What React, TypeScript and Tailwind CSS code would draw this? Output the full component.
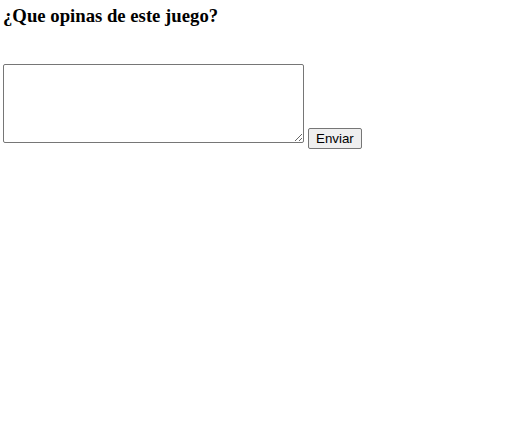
import React, { useState } from 'react';

export default function App() {
  const [text, setText] = useState('');

  return (
    <div className="min-h-[434px] bg-white px-[3px] pt-[5px] font-['Liberation_Serif','Times_New_Roman',serif] text-black">
      <h3 className="text-[18.72px] font-bold leading-[22px]">¿Que opinas de este juego?</h3>

      <form
        className="mt-[37px] text-[16px]"
        onSubmit={(e) => {
          e.preventDefault();
          setText('');
        }}
      >
        <textarea
          value={text}
          onChange={(e) => setText(e.target.value)}
          className="inline-block w-[301px] h-[79px] border border-[#767676] rounded-[2px] p-[2px] align-baseline font-['Liberation_Mono',monospace] text-[13.33px] bg-white"
        />{' '}
        <button
          type="submit"
          className="inline-block h-[21px] px-[7px] border border-[#767676] rounded-[2px] bg-[#efefef] font-['Liberation_Sans',Arial,sans-serif] text-[13.33px] leading-[17px] text-black align-baseline"
        >
          Enviar
        </button>
      </form>
    </div>
  );
}
